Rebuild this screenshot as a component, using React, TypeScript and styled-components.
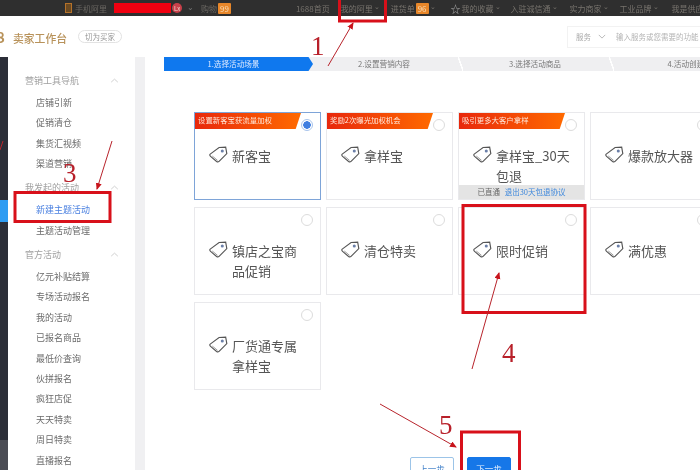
import * as React from 'react';
import styled, { createGlobalStyle } from 'styled-components';

const GlobalStyle = createGlobalStyle`
  html, body {
    margin: 0;
    padding: 0;
    background: #fff;
  }
  body {
    font-family: "Noto Sans CJK SC", "Noto Sans", sans-serif;
  }
`;

const topItems = [
  { label: '1688首页', gap: 65 },
  { label: '我的阿里', gap: 11, caret: true },
  { label: '进货单', gap: 11, badge: '96', caret: true },
  { label: '我的收藏', gap: 15, star: true, caret: true },
  { label: '入驻诚信通', gap: 10, caret: true },
  { label: '实力商家', gap: 12, caret: true },
  { label: '工业品牌', gap: 11, caret: true },
  { label: '我是供应商', gap: 13 },
];

const steps = ['1.选择活动场景', '2.设置营销内容', '3.选择活动商品', '4.活动创建完成'];

const menu = [
  { title: '营销工具导航', items: ['店铺引新', '促销清仓', '集货汇视频', '渠道营销'] },
  { title: '我发起的活动', items: ['新建主题活动', '主题活动管理'] },
  {
    title: '官方活动',
    items: ['亿元补贴结算', '专场活动报名', '我的活动', '已报名商品', '最低价查询', '伙拼报名', '疯狂店促', '天天特卖', '周日特卖', '直播报名'],
  },
];

const cards = [
  { name: '新客宝', banner: '设置新客宝获流量加权', selected: true },
  { name: '拿样宝', banner: '奖励2次曝光加权机会' },
  { name: '拿样宝_30天包退', banner: '吸引更多大客户拿样', footer: true },
  { name: '爆款放大器' },
  { name: '镇店之宝商品促销' },
  { name: '清仓特卖' },
  { name: '限时促销' },
  { name: '满优惠' },
  { name: '厂货通专属拿样宝' },
];

const TagIcon = () => (
  <TagSvg viewBox="0 0 20 18">
    <path
      d="M1.2 8.6 10.6 1.6 17.6 1.2 18.8 8 10.6 16.2C9.8 17 8.8 17 8 16.4L1.6 11C.7 10.3.5 9.2 1.2 8.6Z"
      fill="none"
      stroke="#555"
      strokeWidth="1.2"
    />
    <path d="M3.4 10.6 9 15.2" fill="none" stroke="#999" strokeWidth="1" />
    <circle cx="14" cy="5.4" r="1.6" fill="#6b7fa8" />
  </TagSvg>
);

const Chevron = () => (
  <ChevronSvg viewBox="0 0 10 6">
    <path d="M1 5 5 1.4 9 5" fill="none" stroke="#c8c8c8" strokeWidth="1" />
  </ChevronSvg>
);

// the red markup drawn over the screenshot
const Annotations = () => (
  <Overlay viewBox="0 0 700 470">
    <defs>
      <marker id="head" markerWidth="8" markerHeight="8" refX="6" refY="3" orient="auto">
        <path d="M0 0 7 3 0 6Z" fill="#c8141c" />
      </marker>
    </defs>
    <g fill="none" stroke="#d8101a" strokeWidth="3">
      <rect x="339.5" y="-3" width="46" height="24" />
      <rect x="15" y="192.5" width="95" height="29" />
      <rect x="463" y="205.5" width="122" height="107" />
      <rect x="461.5" y="432" width="58" height="44" />
    </g>
    <g fill="none" stroke="#b8242c" strokeWidth="1">
      <path d="M328 66 353 23" markerEnd="url(#head)" />
      <path d="M112 141 97 189" markerEnd="url(#head)" />
      <path d="M472 369 499 273" markerEnd="url(#head)" />
      <path d="M380 404 456 447" markerEnd="url(#head)" />
      <path d="M0 150 3 141" />
    </g>
    <g fill="#b8202a" fontFamily='"Liberation Serif", serif' fontSize="27">
      <text x="311" y="55">1</text>
      <text x="63" y="182">3</text>
      <text x="502" y="362">4</text>
      <text x="439" y="434">5</text>
    </g>
  </Overlay>
);

export default function App() {
  return (
    <Page>
      <GlobalStyle />
      <TopBar>
        <PhoneMark />
        <TopText>手机阿里</TopText>
        <RedactedName />
        <LevelBadge>Lx</LevelBadge>
        <TopCaret>⌄</TopCaret>
        <TopText>购物</TopText>
        <CountBadge>99</CountBadge>
        {topItems.map((item) => (
          <TopLink key={item.label} $gap={item.gap}>
            {item.star && <StarGlyph>☆</StarGlyph>}
            {item.label}
            {item.badge && <CountBadge>{item.badge}</CountBadge>}
            {item.caret && <SmallCaret>⌄</SmallCaret>}
          </TopLink>
        ))}
      </TopBar>

      <Header>
        <Logo>
          <LogoNumber>8</LogoNumber>
          卖家工作台
        </Logo>
        <SwitchPill>切为买家</SwitchPill>
        <SearchBox>
          <SearchKind>服务</SearchKind>
          <SearchCaret viewBox="0 0 10 6">
            <path d="M1 1 5 5 9 1" fill="none" stroke="#aaa" strokeWidth="1" />
          </SearchCaret>
          <SearchHint>输入服务或您需要的功能</SearchHint>
        </SearchBox>
      </Header>

      <Body>
        <Rail>
          <RailActive />
          <RailFoot />
        </Rail>
        <Sidebar>
          {menu.map((group) => (
            <MenuGroup key={group.title}>
              <MenuTitle>
                {group.title}
                <Chevron />
              </MenuTitle>
              {group.items.map((name) => (
                <MenuItem key={name} $active={name === '新建主题活动'}>
                  {name}
                </MenuItem>
              ))}
            </MenuGroup>
          ))}
        </Sidebar>
        <Gutter />
        <Main>
          <Steps>
            {steps.map((label, i) => (
              <Step key={label} $active={i === 0}>
                {label}
              </Step>
            ))}
          </Steps>
          <CardGrid>
            {cards.map((card) => (
              <Card key={card.name} $selected={card.selected}>
                {card.banner && <Banner>{card.banner}</Banner>}
                <Radio $selected={card.selected} />
                <CardBody>
                  <TagIcon />
                  <CardName>{card.name}</CardName>
                </CardBody>
                {card.footer && (
                  <CardFooter>
                    已直通 <FooterLink>退出30天包退协议</FooterLink>
                  </CardFooter>
                )}
              </Card>
            ))}
          </CardGrid>
          <Actions>
            <PrevButton>上一步</PrevButton>
            <NextButton>下一步</NextButton>
          </Actions>
        </Main>
      </Body>
      <Annotations />
    </Page>
  );
}

const Page = styled.div`
  position: relative;
  width: 700px;
  height: 470px;
  overflow: hidden;
  background: #fff;
  filter: blur(0.35px);
`;

const TopBar = styled.div`
  display: flex;
  align-items: center;
  height: 16px;
  padding-left: 65px;
  background: #2f2f2f;
  color: #77736d;
  font-size: 8px;
  white-space: nowrap;

  & > * {
    flex-shrink: 0;
  }
`;

const PhoneMark = styled.span`
  width: 5px;
  height: 8px;
  margin-right: 3px;
  border: 1px solid #b5722a;
  background: #6b4a22;
`;

const TopText = styled.span`
  color: #6a6762;
`;

const RedactedName = styled.span`
  width: 57px;
  height: 10px;
  margin-left: 7px;
  background: #f00010;
`;

const LevelBadge = styled.span`
  display: flex;
  align-items: center;
  justify-content: center;
  width: 10px;
  height: 10px;
  margin-left: 1px;
  border-radius: 50%;
  background: #c8404a;
  color: #f0d8d0;
  font-size: 6px;
`;

const TopCaret = styled.span`
  margin: -4px 7px 0 5px;
  color: #777;
`;

const CountBadge = styled.span`
  display: inline-block;
  margin-left: 1px;
  padding: 0 2px;
  height: 11px;
  line-height: 11px;
  border-radius: 1px;
  background: #e8872a;
  color: #f6dcb8;
  font-size: 8px;
`;

const TopLink = styled.span<{ $gap: number }>`
  display: inline-flex;
  align-items: center;
  margin-left: ${({ $gap }) => $gap}px;
`;

const StarGlyph = styled.span`
  margin-right: 1px;
  color: #a8a8a8;
  font-size: 10px;
`;

const SmallCaret = styled.span`
  margin: -4px 0 0 1px;
  font-size: 7px;
`;

const Header = styled.div`
  display: flex;
  align-items: center;
  height: 41px;
  background: #fff;
`;

const Logo = styled.div`
  display: flex;
  align-items: baseline;
  color: #b8925a;
  font-size: 10.8px;
  font-weight: 500;
`;

const LogoNumber = styled.span`
  width: 17px;
  margin-left: -4px;
  box-sizing: border-box;
  font-size: 15px;
  font-weight: 700;
`;

const SwitchPill = styled.div`
  display: flex;
  align-items: center;
  justify-content: center;
  width: 42px;
  height: 11px;
  margin-left: 11px;
  border: 1px solid #e2e2e2;
  border-radius: 7px;
  color: #999;
  font-size: 7.5px;
`;

const SearchBox = styled.div`
  display: flex;
  align-items: center;
  flex-shrink: 0;
  width: 130px;
  height: 20px;
  margin-left: auto;
  margin-right: -7px;
  padding-left: 8px;
  border: 1px solid #f2f2f2;
  font-size: 7.5px;
  white-space: nowrap;
`;

const SearchKind = styled.span`
  color: #aaa;
`;

const SearchCaret = styled.svg`
  width: 8px;
  height: 5px;
  margin-left: 7px;
`;

const SearchHint = styled.span`
  margin-left: 10px;
  color: #b4b4b4;
`;

const Body = styled.div`
  display: flex;
  height: 413px;
`;

const Rail = styled.div`
  display: flex;
  flex-direction: column;
  flex-shrink: 0;
  width: 8px;
  padding-top: 143px;
  background: #2b2e38;
`;

const RailActive = styled.div`
  height: 22px;
  background: #2e9cf2;
`;

const RailFoot = styled.div`
  flex: 1;
  margin-top: 218px;
  background: #4a4c54;
`;

const Sidebar = styled.div`
  flex-shrink: 0;
  width: 127px;
  padding-top: 13px;
  box-sizing: border-box;
  background: #fff;
  font-size: 9px;
`;

const MenuGroup = styled.div`
  margin-bottom: 3px;
`;

const MenuTitle = styled.div`
  display: flex;
  align-items: center;
  justify-content: space-between;
  height: 20.4px;
  margin-bottom: 2.5px;
  padding: 0 16px 0 17px;
  color: #a0a0a0;
`;

const ChevronSvg = styled.svg`
  width: 9px;
  height: 5px;
`;

const MenuItem = styled.div<{ $active?: boolean }>`
  height: 20.4px;
  padding-left: 28px;
  line-height: 20.4px;
  color: ${({ $active }) => ($active ? '#4a80e0' : '#6a6a6a')};
`;

const Gutter = styled.div`
  flex-shrink: 0;
  width: 10px;
  background: #f0f0f2;
`;

const Main = styled.div`
  flex: 1;
  min-width: 0;
  background: #fff;
`;

const Steps = styled.div`
  display: flex;
  height: 14px;
  margin-left: 19px;
  margin-right: -60px;
  background: #efeff1;
`;

const Step = styled.div<{ $active?: boolean }>`
  position: relative;
  flex: 0 0 ${({ $active }) => ($active ? 149 : 151)}px;
  padding-right: ${({ $active }) => ($active ? 10 : 9)}px;
  box-sizing: border-box;
  line-height: 13px;
  text-align: center;
  font-size: 7.6px;
  white-space: nowrap;
  color: ${({ $active }) => ($active ? '#dce9ff' : '#777')};
  background: ${({ $active }) => ($active ? '#0f78ee' : 'transparent')};
  clip-path: ${({ $active }) =>
    $active ? 'polygon(0 0, 97% 0, 100% 50%, 97% 100%, 0 100%)' : 'none'};

  &:last-child {
    padding-left: 15px;
  }

  /* slanted white notch between the grey steps */
  &::after {
    content: '';
    display: ${({ $active }) => ($active ? 'none' : 'block')};
    position: absolute;
    top: 0;
    right: 1px;
    width: 5px;
    height: 14px;
    background: linear-gradient(to top left, transparent 42%, #fff 45% 58%, transparent 62%);
    transform: scaleX(-1);
  }
`;

const CardGrid = styled.div`
  display: grid;
  grid-template-columns: repeat(4, 127px);
  grid-auto-rows: 88px;
  column-gap: 5px;
  row-gap: 7px;
  margin: 41px 0 0 49px;
`;

const Card = styled.div<{ $selected?: boolean }>`
  position: relative;
  box-sizing: border-box;
  border: 1px solid ${({ $selected }) => ($selected ? '#7ea4d8' : '#e9e9ec')};
  background: #fff;
`;

const Banner = styled.div`
  position: absolute;
  top: 0;
  left: 0;
  width: 106px;
  height: 16px;
  padding-left: 3px;
  box-sizing: border-box;
  line-height: 14px;
  background: linear-gradient(90deg, #e8280c, #ff6a00);
  clip-path: polygon(0 0, 100% 0, 95% 100%, 0 100%);
  color: #ffe6d8;
  font-size: 7.4px;
  white-space: nowrap;
`;

const Radio = styled.span<{ $selected?: boolean }>`
  position: absolute;
  top: 6px;
  right: 7px;
  width: 10px;
  height: 10px;
  border: 1px solid ${({ $selected }) => ($selected ? '#a8c4ec' : '#dcdcdc')};
  border-radius: 50%;
  background: ${({ $selected }) =>
    $selected ? 'radial-gradient(circle, #3f7ee0 0 3.5px, #fff 4px)' : '#fff'};
`;

const CardBody = styled.div`
  display: flex;
  align-items: flex-start;
  padding: 33px 0 0 14px;
`;

const TagSvg = styled.svg`
  flex-shrink: 0;
  width: 19px;
  height: 17px;
  margin-right: 4px;
`;

const CardName = styled.div`
  width: 75px;
  color: #555;
  font-size: 13px;
  line-height: 20px;
  word-break: break-all;
`;

const CardFooter = styled.div`
  position: absolute;
  left: 0;
  right: 0;
  bottom: 0;
  height: 14px;
  line-height: 14px;
  background: #e4e4e4;
  color: #666;
  font-size: 7.5px;
  text-align: center;
`;

const FooterLink = styled.span`
  margin-left: 3px;
  color: #3f88dc;
`;

const Actions = styled.div`
  display: flex;
  gap: 13px;
  margin: 67px 0 0 265px;
`;

const PrevButton = styled.button`
  width: 44px;
  height: 22px;
  padding: 0;
  border: 1px solid #9cc4e8;
  border-radius: 2px;
  background: #fff;
  color: #3f7fc8;
  font-family: inherit;
  font-size: 8.5px;
`;

const NextButton = styled(PrevButton)`
  border-color: #1677e8;
  background: #1677e8;
  color: #e4f0ff;
`;

const Overlay = styled.svg`
  position: absolute;
  top: 0;
  left: 0;
  width: 700px;
  height: 470px;
  pointer-events: none;
`;
